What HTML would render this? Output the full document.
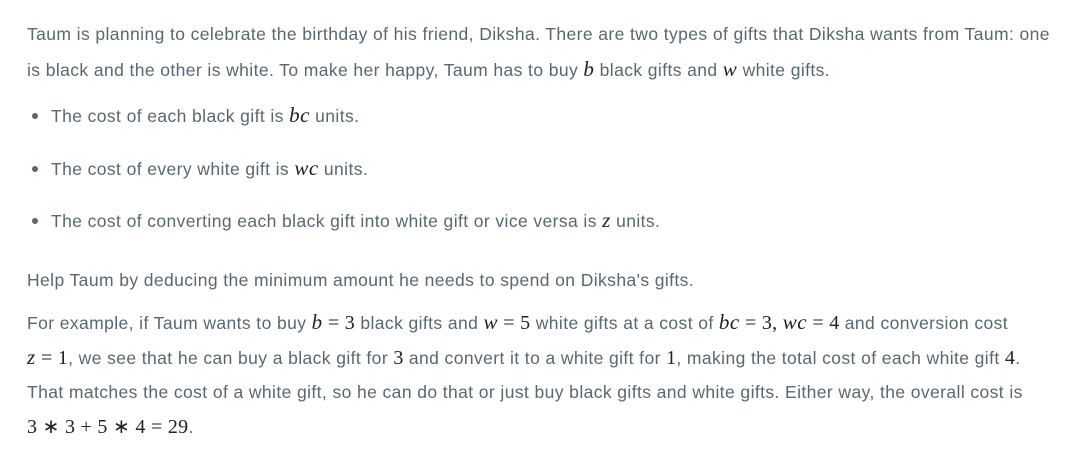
<!DOCTYPE html>
<html><head><meta charset="utf-8"><style>
body{margin:0;background:#fff;width:1071px;height:450px;overflow:hidden;position:relative;font-family:"Liberation Sans",sans-serif;font-size:17.5px;letter-spacing:0.4px;color:#576871;}
.l{position:absolute;left:27px;white-space:nowrap;line-height:20px;}
.b{left:51px}
.dot{position:absolute;left:32px;width:6px;height:6px;border-radius:50%;background:#576871;}
m{font-family:"Liberation Serif",serif;font-style:italic;font-size:21px;color:#222;letter-spacing:0.5px;}
n{font-family:"Liberation Serif",serif;font-size:20px;color:#222;letter-spacing:0.3px;}
</style></head><body>
<div class="l" style="top:24px">Taum is planning to celebrate the birthday of his friend, Diksha. There are two types of gifts that Diksha wants from Taum: one</div>
<div class="l" style="top:59px">is black and the other is white. To make her happy, Taum has to buy <m>b</m> black gifts and <m>w</m> white gifts.</div>
<div class="dot" style="top:113px"></div>
<div class="l b" style="top:105px">The cost of each black gift is <m>bc</m> units.</div>
<div class="dot" style="top:166px"></div>
<div class="l b" style="top:158px">The cost of every white gift is <m>wc</m> units.</div>
<div class="dot" style="top:218px"></div>
<div class="l b" style="top:210px">The cost of converting each black gift into white gift or vice versa is <m>z</m> units.</div>
<div class="l" style="top:270px">Help Taum by deducing the minimum amount he needs to spend on Diksha's gifts.</div>
<div class="l" style="top:312px">For example, if Taum wants to buy <m>b</m> <n>= 3</n> black gifts and <m>w</m> <n>= 5</n> white gifts at a cost of <m>bc</m> <n>= 3,</n> <m>wc</m> <n>= 4</n> and conversion cost</div>
<div class="l" style="top:347px"><m>z</m> <n>= 1</n>, we see that he can buy a black gift for <n>3</n> and convert it to a white gift for <n>1</n>, making the total cost of each white gift <n>4</n>.</div>
<div class="l" style="top:382px">That matches the cost of a white gift, so he can do that or just buy black gifts and white gifts. Either way, the overall cost is</div>
<div class="l" style="top:417px"><n>3 ∗ 3 + 5 ∗ 4 = 29</n>.</div>
</body></html>
